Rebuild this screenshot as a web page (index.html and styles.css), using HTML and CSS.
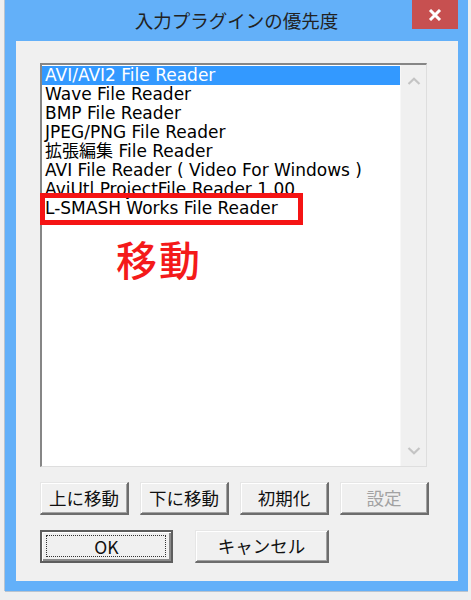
FILE: index.html
```html
<!DOCTYPE html>
<html lang="ja">
<head>
<meta charset="utf-8">
<title>入力プラグインの優先度</title>
<link rel="stylesheet" href="styles.css">
</head>
<body>
<div class="window">
  <div class="titlebar">
    <span class="title">入力プラグインの優先度</span>
    <div class="close">
      <svg width="14" height="12" viewBox="0 0 14 12"><path d="M2 1 L12 11 M12 1 L2 11" stroke="#fff" stroke-width="3" fill="none"/></svg>
    </div>
  </div>
  <div class="client">
    <div class="listbox">
      <ul class="items">
        <li class="item selected">AVI/AVI2 File Reader</li>
        <li class="item">Wave File Reader</li>
        <li class="item">BMP File Reader</li>
        <li class="item">JPEG/PNG File Reader</li>
        <li class="item">拡張編集 File Reader</li>
        <li class="item">AVI File Reader ( Video For Windows )</li>
        <li class="item">AviUtl ProjectFile Reader 1.00</li>
        <li class="item">L-SMASH Works File Reader</li>
      </ul>
      <div class="scrollbar">
        <svg class="chev" width="14" height="8" viewBox="0 0 14 8"><path d="M1.5 7 L7 1.8 L12.5 7" stroke="#c4c4c4" stroke-width="2.2" fill="none"/></svg>
        <svg class="chev" width="14" height="8" viewBox="0 0 14 8"><path d="M1.5 1 L7 6.2 L12.5 1" stroke="#c4c4c4" stroke-width="2.2" fill="none"/></svg>
      </div>
    </div>
    <div class="row row1">
      <button class="btn">上に移動</button>
      <button class="btn">下に移動</button>
      <button class="btn">初期化</button>
      <button class="btn disabled">設定</button>
    </div>
    <div class="row row2">
      <button class="btn default">OK</button>
      <button class="btn">キャンセル</button>
    </div>
    <div class="annot-box"></div>
    <div class="annot-text">移動</div>
  </div>
</div>
</body>
</html>
```

FILE: styles.css
```css
html, body {
  margin: 0;
  padding: 0;
}
body {
  background: #efefef;
  width: 471px;
  height: 600px;
  overflow: hidden;
  font-family: "DejaVu Sans", "Noto Sans CJK JP", sans-serif;
}
.window {
  margin-left: 5px;
  width: 463px;
  height: 591px;
  background: #63b0f9;
  box-shadow: -1px 0 0 #b9c4cf, 0 1px 0 #b9c4cf;
  position: relative;
  display: flex;
  flex-direction: column;
}
.titlebar {
  height: 41px;
  display: flex;
  justify-content: center;
  align-items: center;
  position: relative;
}
.title {
  font-family: "Noto Sans CJK JP", sans-serif;
  font-size: 18.5px;
  color: #222;
  margin-top: -1px;
}
.close {
  position: absolute;
  top: 0;
  right: 10px;
  width: 46px;
  height: 29px;
  background: #c75050;
  display: flex;
  align-items: center;
  justify-content: center;
}
.client {
  margin: 0 10px 0 11px;
  height: 540px;
  background: #f0f0f0;
  box-sizing: border-box;
  padding: 22px 0 0 24px;
  position: relative;
}
.listbox {
  width: 387px;
  height: 404px;
  box-sizing: border-box;
  border-top: 2px solid #868686;
  border-left: 2px solid #868686;
  border-right: 1px solid #dedede;
  border-bottom: 1px solid #dedede;
  display: flex;
  background: #fff;
}
.items {
  list-style: none;
  margin: 0;
  padding: 1px 0 0 0;
  flex: 1;
  background: #fff;
}
.item {
  height: 19px;
  line-height: 19px;
  font-size: 17px;
  padding-left: 3px;
  color: #000;
  white-space: nowrap;
  overflow: hidden;
}
.item.selected {
  background: #3399ff;
  color: #fff;
}
.scrollbar {
  width: 26px;
  background: #f0f0f0;
  border-left: 1px solid #f7f7f7;
  display: flex;
  flex-direction: column;
  justify-content: space-between;
  align-items: center;
  padding: 12px 0 11px 0;
  box-sizing: border-box;
}
.row {
  display: flex;
  margin-top: 15px;
}
.row1 {
  gap: 11px;
}
.row2 {
  gap: 22px;
}
.btn {
  height: 33px;
  width: 89px;
  padding: 0;
  margin: 0;
  box-sizing: border-box;
  background: #f0f0f0;
  font-family: "Noto Sans CJK JP", sans-serif;
  font-size: 17.5px;
  color: #111;
  border-style: solid;
  border-width: 1px 2px 2px 1px;
  border-color: #e6e6e6 #6d6d6d #6d6d6d #e6e6e6;
  box-shadow: inset 1px 1px 0 #ffffff, inset -1px -1px 0 #a3a3a3;
  position: relative;
  line-height: 1;
}
.btn.disabled {
  color: #a2a2a2;
}
.row2 .btn {
  width: 134px;
}
.btn.default {
  width: 133px;
  border: 2px solid #5e5e5e;
  box-shadow: inset 1px 1px 0 #ffffff, inset -2px -2px 0 #8a8a8a;
}
.btn.default::after {
  content: "";
  position: absolute;
  left: 4px;
  top: 3px;
  right: 5px;
  bottom: 4px;
  border: 1px dotted #333;
}
.annot-box {
  position: absolute;
  left: 24px;
  top: 152px;
  width: 263px;
  height: 32px;
  box-sizing: border-box;
  border: 5px solid #f51414;
}
.annot-text {
  position: absolute;
  left: 100px;
  top: 197px;
  font-family: "Noto Sans CJK JP", sans-serif;
  font-size: 41px;
  line-height: 41px;
  letter-spacing: 2px;
  font-weight: 500;
  color: #f41a1a;
}
```
